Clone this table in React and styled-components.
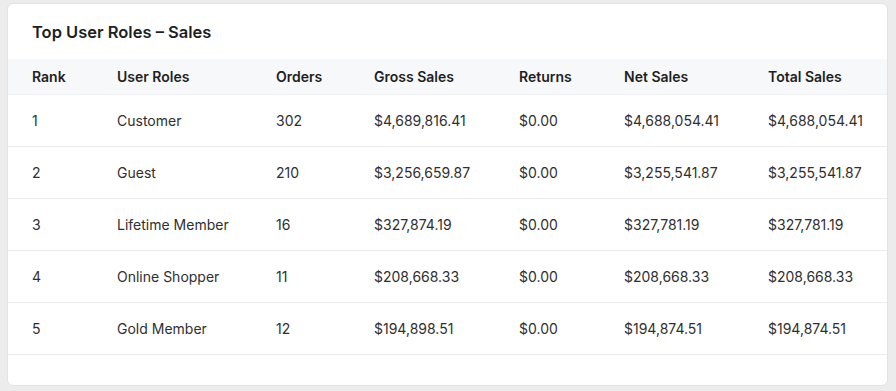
import React from 'react';
import styled, { createGlobalStyle } from 'styled-components';

const GlobalStyle = createGlobalStyle`
  body {
    margin: 0;
    background: #ececec;
    font-family: Inter, "Noto Sans", sans-serif;
    -webkit-font-smoothing: antialiased;
  }
`;

const Page = styled.div`
  width: 896px;
  height: 391px;
  padding: 3px 8px 5px 7px;
  box-sizing: border-box;
`;

const Card = styled.div`
  background: #fff;
  border: 1px solid #e2e2e2;
  border-radius: 6px;
  height: 100%;
  box-sizing: border-box;
  overflow: hidden;
`;

const Title = styled.h2`
  margin: 0;
  height: 55px;
  display: flex;
  align-items: center;
  padding: 0 24px;
  font-size: 16.5px;
  font-weight: 600;
  color: #1f1f1f;
`;

const columns = '85px 159px 98px 145px 105px 144px 1fr';

const Row = styled.div`
  display: grid;
  grid-template-columns: ${columns};
  align-items: center;
  padding-left: 24px;
  height: ${p => (p.$head ? '35px' : '51px')};
  background: ${p => (p.$head ? '#f6f8fa' : '#fff')};
  border-bottom: 1px solid ${p => (p.$head ? '#eef0f2' : '#ececec')};
  font-size: 14px;
  font-weight: ${p => (p.$head ? 600 : 400)};
  color: ${p => (p.$head ? '#1f1f1f' : '#2f2f2f')};
`;

const Cell = styled.div`
  white-space: nowrap;
`;

const heads = ['Rank', 'User Roles', 'Orders', 'Gross Sales', 'Returns', 'Net Sales', 'Total Sales'];

const rows = [
  ['1', 'Customer', '302', '$4,689,816.41', '$0.00', '$4,688,054.41', '$4,688,054.41'],
  ['2', 'Guest', '210', '$3,256,659.87', '$0.00', '$3,255,541.87', '$3,255,541.87'],
  ['3', 'Lifetime Member', '16', '$327,874.19', '$0.00', '$327,781.19', '$327,781.19'],
  ['4', 'Online Shopper', '11', '$208,668.33', '$0.00', '$208,668.33', '$208,668.33'],
  ['5', 'Gold Member', '12', '$194,898.51', '$0.00', '$194,874.51', '$194,874.51'],
];

const App = () => {
  return (
    <Page>
      <GlobalStyle />
      <Card>
        <Title>Top User Roles – Sales</Title>
        <Row $head>
          {heads.map(h => <Cell key={h}>{h}</Cell>)}
        </Row>
        {rows.map(r => (
          <Row key={r[0]}>
            {r.map((c, i) => <Cell key={i}>{c}</Cell>)}
          </Row>
        ))}
      </Card>
    </Page>
  );
};

export default App;
